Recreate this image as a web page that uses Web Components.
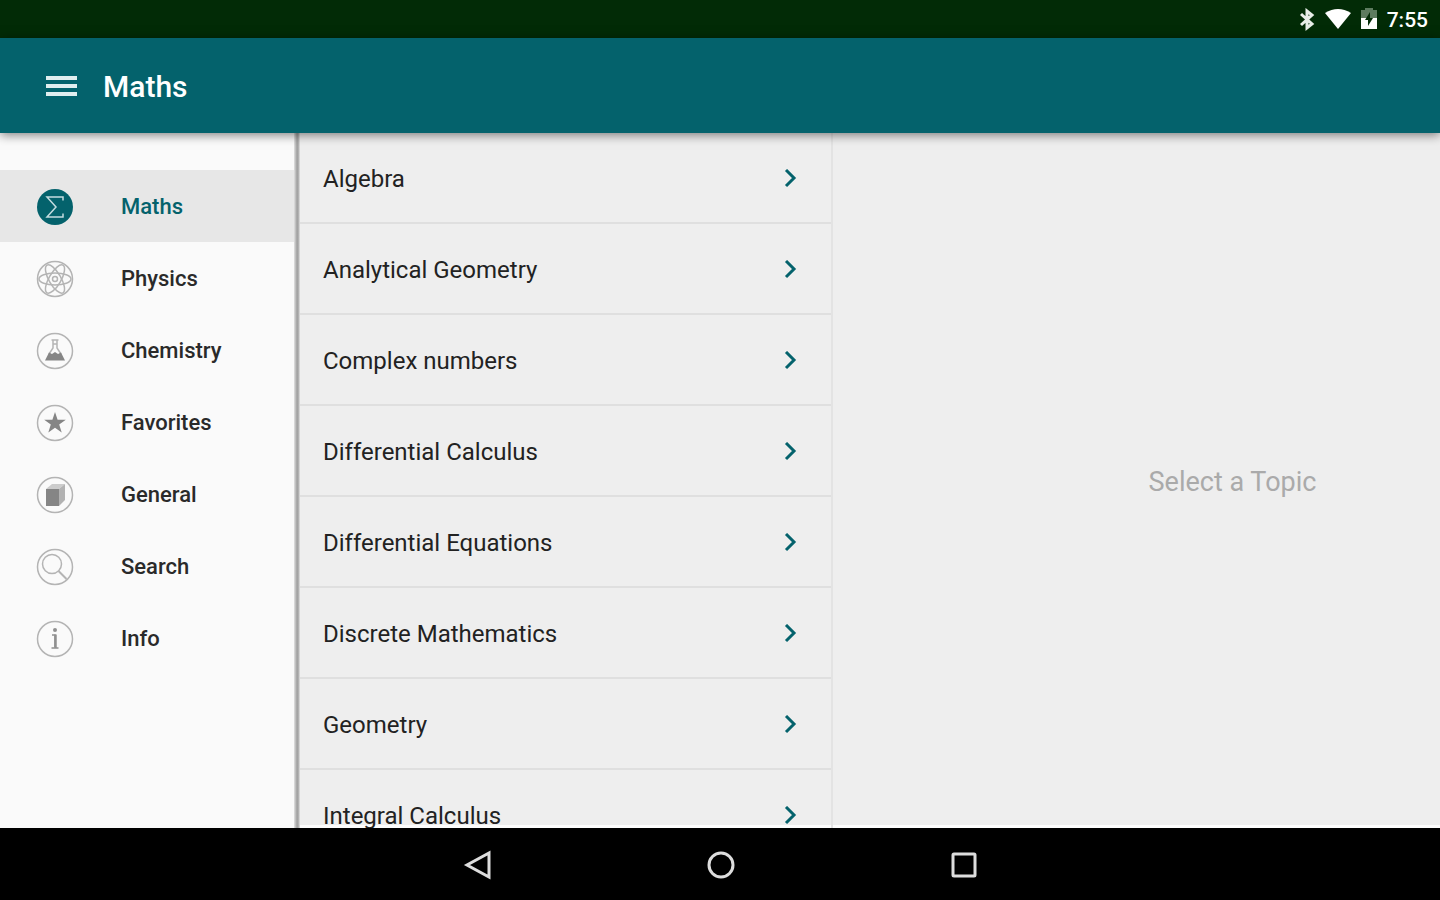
<!DOCTYPE html>
<html lang="en">
<head>
<meta charset="utf-8">
<meta name="viewport" content="width=device-width, initial-scale=1">
<title>Maths</title>
<style>
  body {
    margin: 0;
    font-family: Roboto, "Noto Sans", sans-serif;
    --primary: #04626c;
    --surface: #eeeeee;
  }
</style>
</head>
<body>
<formula-app></formula-app>

<script>
//shared helper, every element gets an open shadow root with its own markup
const attach = (el, html) => {
  const template = document.createElement("template");
  template.innerHTML = html;
  el.attachShadow({ mode: "open" });
  el.shadowRoot.appendChild(template.content.cloneNode(true));
};

//menu icons, drawn on a 38x38 grid
const icons = {
  maths: `<circle cx="19" cy="19" r="18" fill="#04626c"/>
    <path d="M27 12.5V9H11l9 10-9 10h16v-3.500" fill="none" stroke="#c3dcdf" stroke-width="1.500"/>`,
  physics: `<circle cx="19" cy="19" r="17.500"/>
    <ellipse cx="19" cy="19" rx="16" ry="6"/>
    <ellipse cx="19" cy="19" rx="16" ry="6" transform="rotate(60 19 19)"/>
    <ellipse cx="19" cy="19" rx="16" ry="6" transform="rotate(120 19 19)"/>
    <circle cx="19" cy="19" r="2.500"/>`,
  chemistry: `<circle cx="19" cy="19" r="17.500"/>
    <path d="M15.500 8h7M17 8v8l-4 6M21 8v8l4 6M17 12h4"/>
    <path d="M13 20.500l3 1.500 3-2 3 2 3-1.500 4 8H9z" fill="#858585" stroke="none"/>`,
  favorites: `<circle cx="19" cy="19" r="17.500"/>
    <path d="M19 8l2.600 7.800h8.200l-6.600 4.800 2.500 7.900L19 23.700l-6.700 4.800 2.500-7.900-6.600-4.800h8.200z" fill="#858585" stroke="none"/>`,
  general: `<circle cx="19" cy="19" r="17.500"/>
    <path d="M10 13l6-5h13l-6 5z" fill="#cccccc" stroke="none"/>
    <path d="M23 13l6-5v16l-6 6z" fill="#b2b2b2" stroke="none"/>
    <path d="M10 13h13v17H10z" fill="#858585" stroke="none"/>`,
  search: `<circle cx="19" cy="19" r="17.500"/>
    <circle cx="16" cy="16" r="9.500"/>
    <path d="M22.500 23l8 8" stroke-width="2"/>`,
  info: `<circle cx="19" cy="19" r="17.500"/>
    <circle cx="19" cy="10" r="2" fill="#909090" stroke="none"/>
    <path d="M16 15h3v12M15.500 28h7" stroke="#909090"/>
    <path d="M19.500 14.500V28" stroke="#909090" stroke-width="2.500"/>`,
};

customElements.define("status-bar", class extends HTMLElement {
  constructor() {
    super();
    attach(this, `
      <style>
        :host {
          display: flex;
          align-items: center;
          justify-content: flex-end;
          gap: 9px;
          height: 38px;
          padding: 2px 12px 0;
          box-sizing: border-box;
          background: #022b06;
          color: #ffffff;
          font-size: 21px;
          font-weight: 500;
          line-height: 24px;
        }
        svg { display: block; }
      </style>
      <svg width="18" height="24" viewBox="0 0 18 24" fill="none" stroke="#e8ede8" stroke-width="3"><path d="M3 6l11 10-5 4V3l5 4L3 17"/></svg>
      <svg width="26" height="24" viewBox="0 0 26 24"><path d="M0 5Q13-3 26 5L13 21z" fill="#ffffff"/></svg>
      <svg width="18" height="24" viewBox="0 0 18 24">
        <path d="M5 2V0h8v2h4v9H1V2z" fill="#5d7b5f"/>
        <path d="M1 10h16v11H1z" fill="#ffffff"/>
        <path d="M10 4l-5 8h3v6l5-8h-3z" fill="#022b06"/>
      </svg>
      <slot></slot>
    `);
  }
});

customElements.define("app-bar", class extends HTMLElement {
  constructor() {
    super();
    attach(this, `
      <style>
        :host {
          display: flex;
          align-items: center;
          gap: 26px;
          height: 95px;
          padding: 2px 46px 0;
          box-sizing: border-box;
          background: var(--primary);
          color: #ffffff;
          box-shadow: 0 2px 10px rgba(0, 0, 0, 0.5);
          position: relative;
          z-index: 1;
        }
        button { padding: 0; border: 0; background: none; cursor: pointer; }
        svg { display: block; }
        h1 { margin: 0; font-size: 30px; font-weight: 500; line-height: 36px; }
      </style>
      <button type="button" aria-label="Menu">
        <svg width="31" height="22" viewBox="0 0 31 22" fill="#e0eeef"><path d="M0 0h31v4H0zM0 8h31v4H0zM0 16h31v4H0z"/></svg>
      </button>
      <h1><slot></slot></h1>
    `);
  }
});

customElements.define("menu-item", class extends HTMLElement {
  constructor() {
    super();
    attach(this, `
      <style>
        :host { display: block; color: #2a2a2a; }
        :host([selected]) { background: #e7e7e7; color: var(--primary); }
        a {
          display: flex;
          align-items: center;
          gap: 47px;
          height: 72px;
          padding: 2px 0 0 36px;
          box-sizing: border-box;
          color: inherit;
          text-decoration: none;
          font-size: 22px;
          font-weight: 500;
          line-height: 28px;
        }
        svg { flex: none; fill: none; stroke: #b4b4b4; stroke-width: 1.5; }
        :host([selected]) svg { stroke: none; }
      </style>
      <a href="#${this.getAttribute("icon")}">
        <svg width="38" height="38" viewBox="0 0 38 38">${icons[this.getAttribute("icon")]}</svg>
        <slot></slot>
      </a>
    `);
  }
});

customElements.define("side-menu", class extends HTMLElement {
  constructor() {
    super();
    attach(this, `
      <style>
        :host {
          display: flex;
          flex: 0 0 300px;
          background: #fafafa;
        }
        nav { flex: 1; padding-top: 37px; }
        .edge {
          flex: none;
          width: 6px;
          background: linear-gradient(to right, #e2e2e2, #a0a0a0 50%, #a8a8a8 70%, #e4e4e4);
        }
      </style>
      <nav><slot></slot></nav>
      <div class="edge"></div>
    `);
  }
});

customElements.define("topic-row", class extends HTMLElement {
  constructor() {
    super();
    attach(this, `
      <style>
        :host { display: block; border-bottom: 2px solid #dfdfdf; }
        a {
          display: flex;
          align-items: center;
          justify-content: space-between;
          height: 89px;
          padding: 2px 34px 0 23px;
          box-sizing: border-box;
          color: #222222;
          text-decoration: none;
          font-size: 24px;
          line-height: 32px;
        }
        svg { flex: none; }
      </style>
      <a href="#topic">
        <span><slot></slot></span>
        <svg width="13" height="20" viewBox="0 0 13 20" fill="none" stroke="#04626c" stroke-width="3"><path d="M2 1l8 8-8 8"/></svg>
      </a>
    `);
  }
});

customElements.define("topic-list", class extends HTMLElement {
  constructor() {
    super();
    attach(this, `
      <style>
        :host {
          display: block;
          flex: 0 0 533px;
          box-sizing: border-box;
          overflow: hidden;
          border-right: 2px solid #e3e3e3;
        }
      </style>
      <slot></slot>
    `);
  }
});

customElements.define("topic-detail", class extends HTMLElement {
  constructor() {
    super();
    attach(this, `
      <style>
        :host {
          display: flex;
          flex: 1;
          align-items: center;
          justify-content: center;
          padding: 2px 0 0 192px;
          color: #aaaaaa;
          font-size: 27px;
          line-height: 32px;
        }
      </style>
      <slot></slot>
    `);
  }
});

customElements.define("system-nav", class extends HTMLElement {
  constructor() {
    super();
    attach(this, `
      <style>
        :host {
          display: flex;
          align-items: center;
          justify-content: center;
          gap: 213px;
          height: 72px;
          padding: 2px 0 0 2px;
          box-sizing: border-box;
          background: #000000;
        }
        button { padding: 0; border: 0; background: none; cursor: pointer; }
        svg { display: block; fill: none; stroke: #dddddd; stroke-width: 3; }
      </style>
      <button type="button" aria-label="Back"><svg width="30" height="30" viewBox="0 0 30 30"><path d="M26 3v24L4 15z"/></svg></button>
      <button type="button" aria-label="Home"><svg width="30" height="30" viewBox="0 0 30 30"><circle cx="15" cy="15" r="12"/></svg></button>
      <button type="button" aria-label="Recent apps"><svg width="30" height="30" viewBox="0 0 30 30"><rect x="4" y="4" width="22" height="22" rx="1"/></svg></button>
    `);
  }
});

customElements.define("formula-app", class extends HTMLElement {
  constructor() {
    super();
    const menu = ["Maths", "Physics", "Chemistry", "Favorites", "General", "Search", "Info"];
    const topics = [
      "Algebra",
      "Analytical Geometry",
      "Complex numbers",
      "Differential Calculus",
      "Differential Equations",
      "Discrete Mathematics",
      "Geometry",
      "Integral Calculus",
    ];
    //the light strip above the system buttons is a background, so the last row runs over it
    attach(this, `
      <style>
        :host { display: flex; flex-direction: column; height: 100vh; }
        status-bar, app-bar, system-nav { flex: none; }
        main {
          display: flex;
          flex: 1;
          min-height: 0;
          overflow: hidden;
          background: linear-gradient(#fdfdfd, #fdfdfd) bottom / 100% 3px no-repeat var(--surface);
        }
      </style>
      <status-bar>7:55</status-bar>
      <app-bar>Maths</app-bar>
      <main>
        <side-menu>
          ${menu.map((name, i) => `<menu-item icon="${name.toLowerCase()}"${i === 0 ? " selected" : ""}>${name}</menu-item>`).join("")}
        </side-menu>
        <topic-list>
          ${topics.map((name) => `<topic-row>${name}</topic-row>`).join("")}
        </topic-list>
        <topic-detail>Select a Topic</topic-detail>
      </main>
      <system-nav></system-nav>
    `);
  }
});
</script>
</body>
</html>
